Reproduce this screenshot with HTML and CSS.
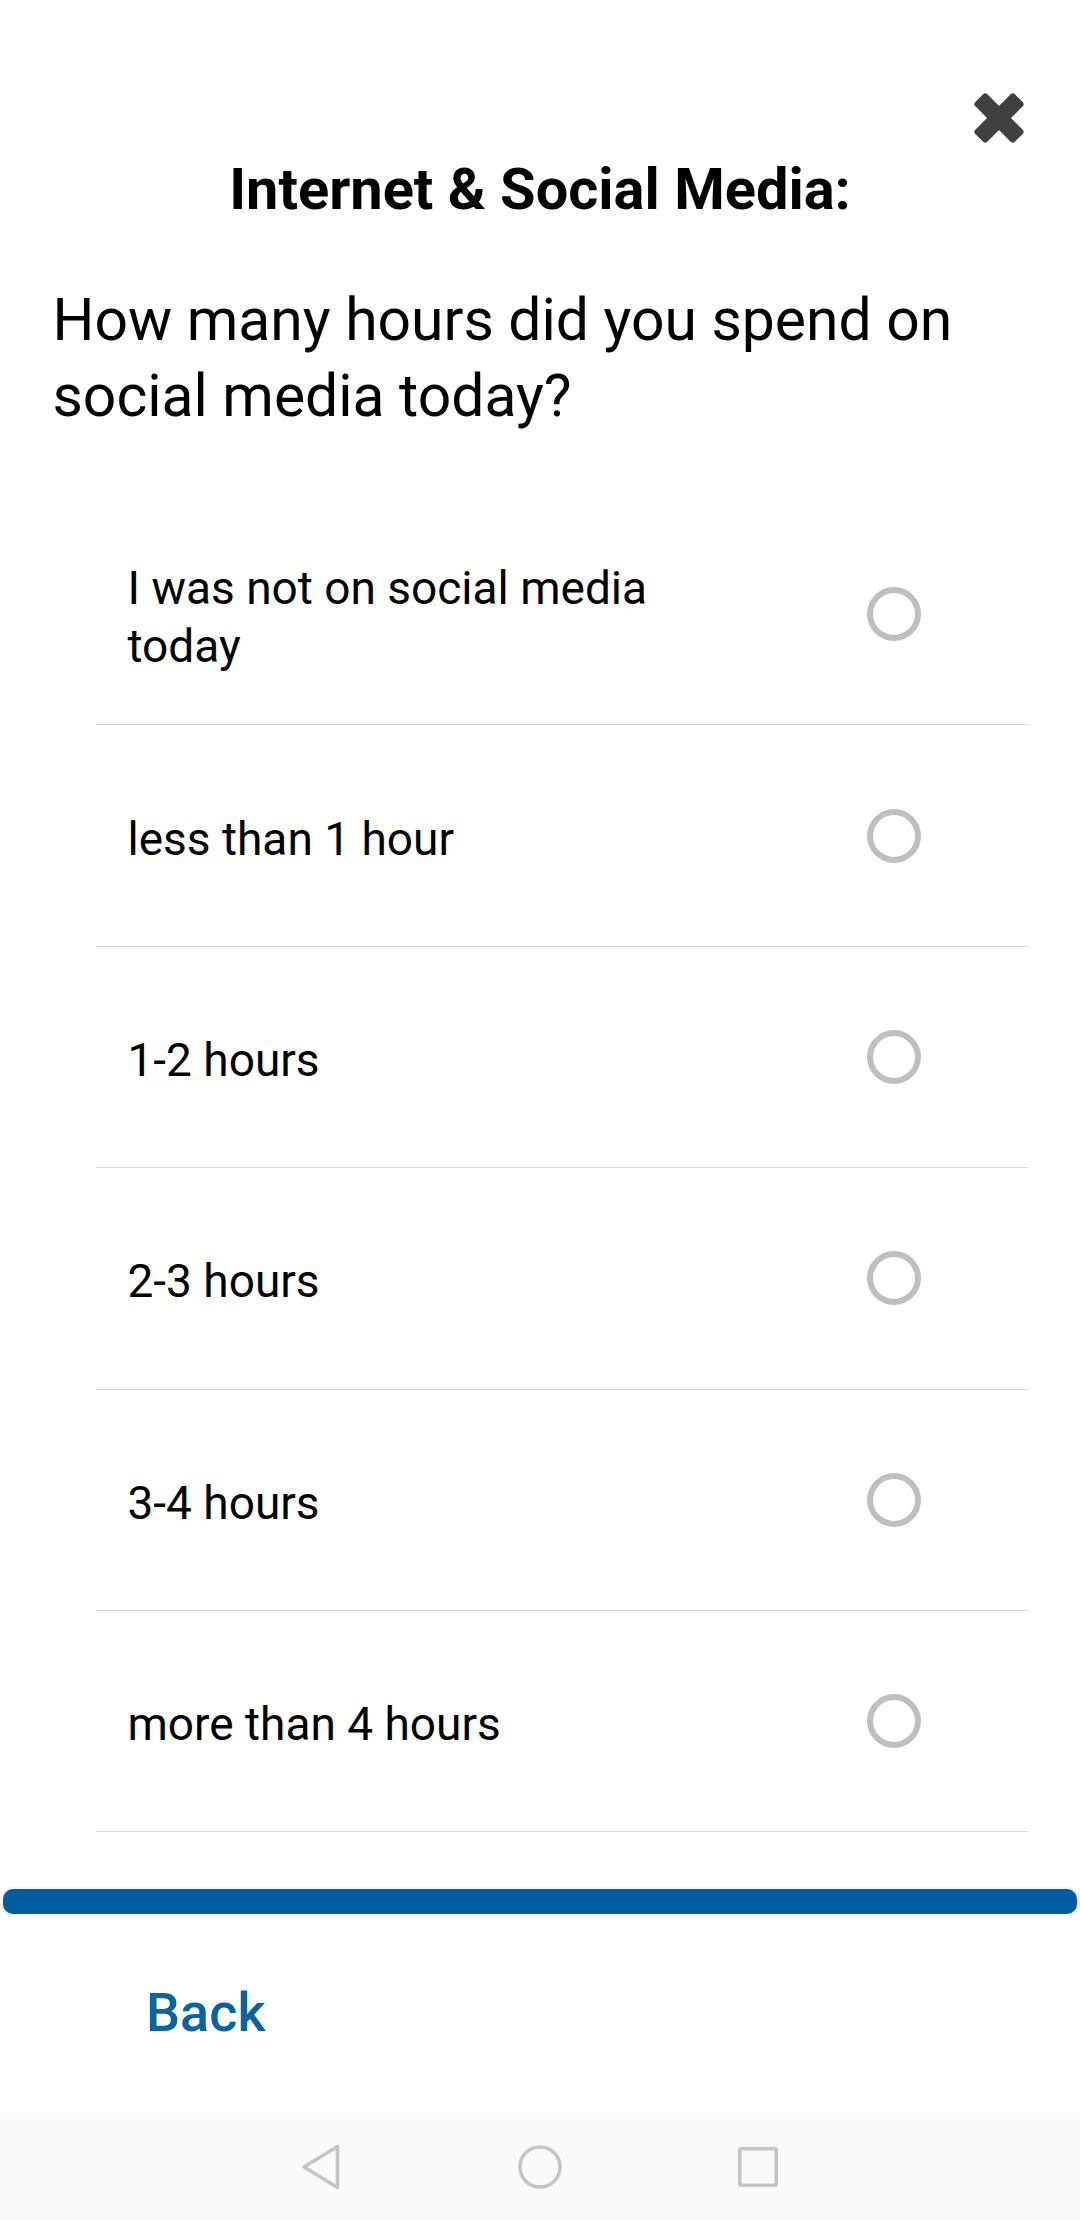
FILE: index.html
```html
<!DOCTYPE html>
<html lang="en">
<head>
<meta charset="utf-8">
<title>Internet &amp; Social Media</title>
<link rel="stylesheet" href="styles.css">
</head>
<body>
<div class="screen">
  <div class="topbar">
    <button class="close" aria-label="Close">
      <svg width="52" height="52" viewBox="0 0 52 52">
        <rect x="-2" y="17.5" width="56" height="17" rx="3" fill="#404040" transform="rotate(45 26 26)"/>
        <rect x="-2" y="17.5" width="56" height="17" rx="3" fill="#404040" transform="rotate(-45 26 26)"/>
      </svg>
    </button>
  </div>
  <h1 class="title">Internet &amp; Social Media:</h1>
  <p class="question">How many hours did you spend on social media today?</p>
  <ul class="options">
    <li class="option"><span class="opt-text">I was not on social media today</span><span class="radio"></span></li>
    <li class="option"><span class="opt-text">less than 1 hour</span><span class="radio"></span></li>
    <li class="option"><span class="opt-text">1-2 hours</span><span class="radio"></span></li>
    <li class="option"><span class="opt-text">2-3 hours</span><span class="radio"></span></li>
    <li class="option"><span class="opt-text">3-4 hours</span><span class="radio"></span></li>
    <li class="option"><span class="opt-text">more than 4 hours</span><span class="radio"></span></li>
  </ul>
  <div class="progress"></div>
  <div class="back">Back</div>
  <nav class="navbar">
    <svg class="nav-icon" width="44" height="48" viewBox="0 0 44 48">
      <path d="M37.5 3.5 L4 24 L37.5 44.5 Z" fill="none" stroke="#c4c4c4" stroke-width="3.5" stroke-linejoin="round"/>
    </svg>
    <svg class="nav-icon" width="48" height="48" viewBox="0 0 48 48">
      <circle cx="24" cy="24" r="20" fill="none" stroke="#c4c4c4" stroke-width="3.5"/>
    </svg>
    <svg class="nav-icon" width="44" height="48" viewBox="0 0 44 48">
      <rect x="3.75" y="5.75" width="36.5" height="36.5" rx="1.5" fill="none" stroke="#c4c4c4" stroke-width="3.5"/>
    </svg>
  </nav>
</div>
</body>
</html>
```

FILE: styles.css
```css
html, body {
  margin: 0;
  padding: 0;
  background: #ffffff;
}

body {
  font-family: Roboto, "Noto Sans", "Liberation Sans", sans-serif;
  color: #000000;
}

.screen {
  width: 1080px;
  height: 2220px;
  display: flex;
  flex-direction: column;
  overflow: hidden;
}

.topbar {
  display: flex;
  justify-content: flex-end;
  padding: 92px 55px 0 0;
}

.close {
  width: 52px;
  height: 52px;
  padding: 0;
  border: 0;
  background: none;
  display: block;
}

.close svg {
  display: block;
}

.title {
  margin: 14px 0 0 0;
  text-align: center;
  font-size: 57.75px;
  line-height: 62px;
  font-weight: 700;
}

.question {
  margin: 62px 0 0 0;
  padding: 0 52.5px;
  font-size: 58.8px;
  line-height: 76px;
  font-weight: 400;
}

.options {
  list-style: none;
  margin: 70px 52px 0 96px;
  padding: 0;
}

.option {
  display: flex;
  align-items: center;
  height: 220.4px;
  border-bottom: 1px solid #dadada;
  padding-left: 31.5px;
}

.opt-text {
  max-width: 560px;
  padding-top: 6px;
  font-size: 46px;
  line-height: 58px;
}

.radio {
  margin-left: auto;
  margin-right: 107.5px;
  width: 54px;
  height: 54px;
  box-sizing: border-box;
  border: 6.5px solid #bfbfbf;
  border-radius: 50%;
  flex: none;
}

.progress {
  margin: 57px 3px 0 3px;
  height: 25px;
  border-radius: 10px;
  background: #005ea1;
  box-shadow: 0 0 0 2px #f1f3f5;
}

.back {
  margin-top: 68px;
  padding-left: 146px;
  font-size: 54px;
  line-height: 62px;
  font-weight: 500;
  color: #0b649f;
}

.navbar {
  margin-top: auto;
  height: 107px;
  background: #fafafa;
  display: flex;
  align-items: center;
  justify-content: center;
  gap: 172px;
}

.nav-icon {
  display: block;
}
```
